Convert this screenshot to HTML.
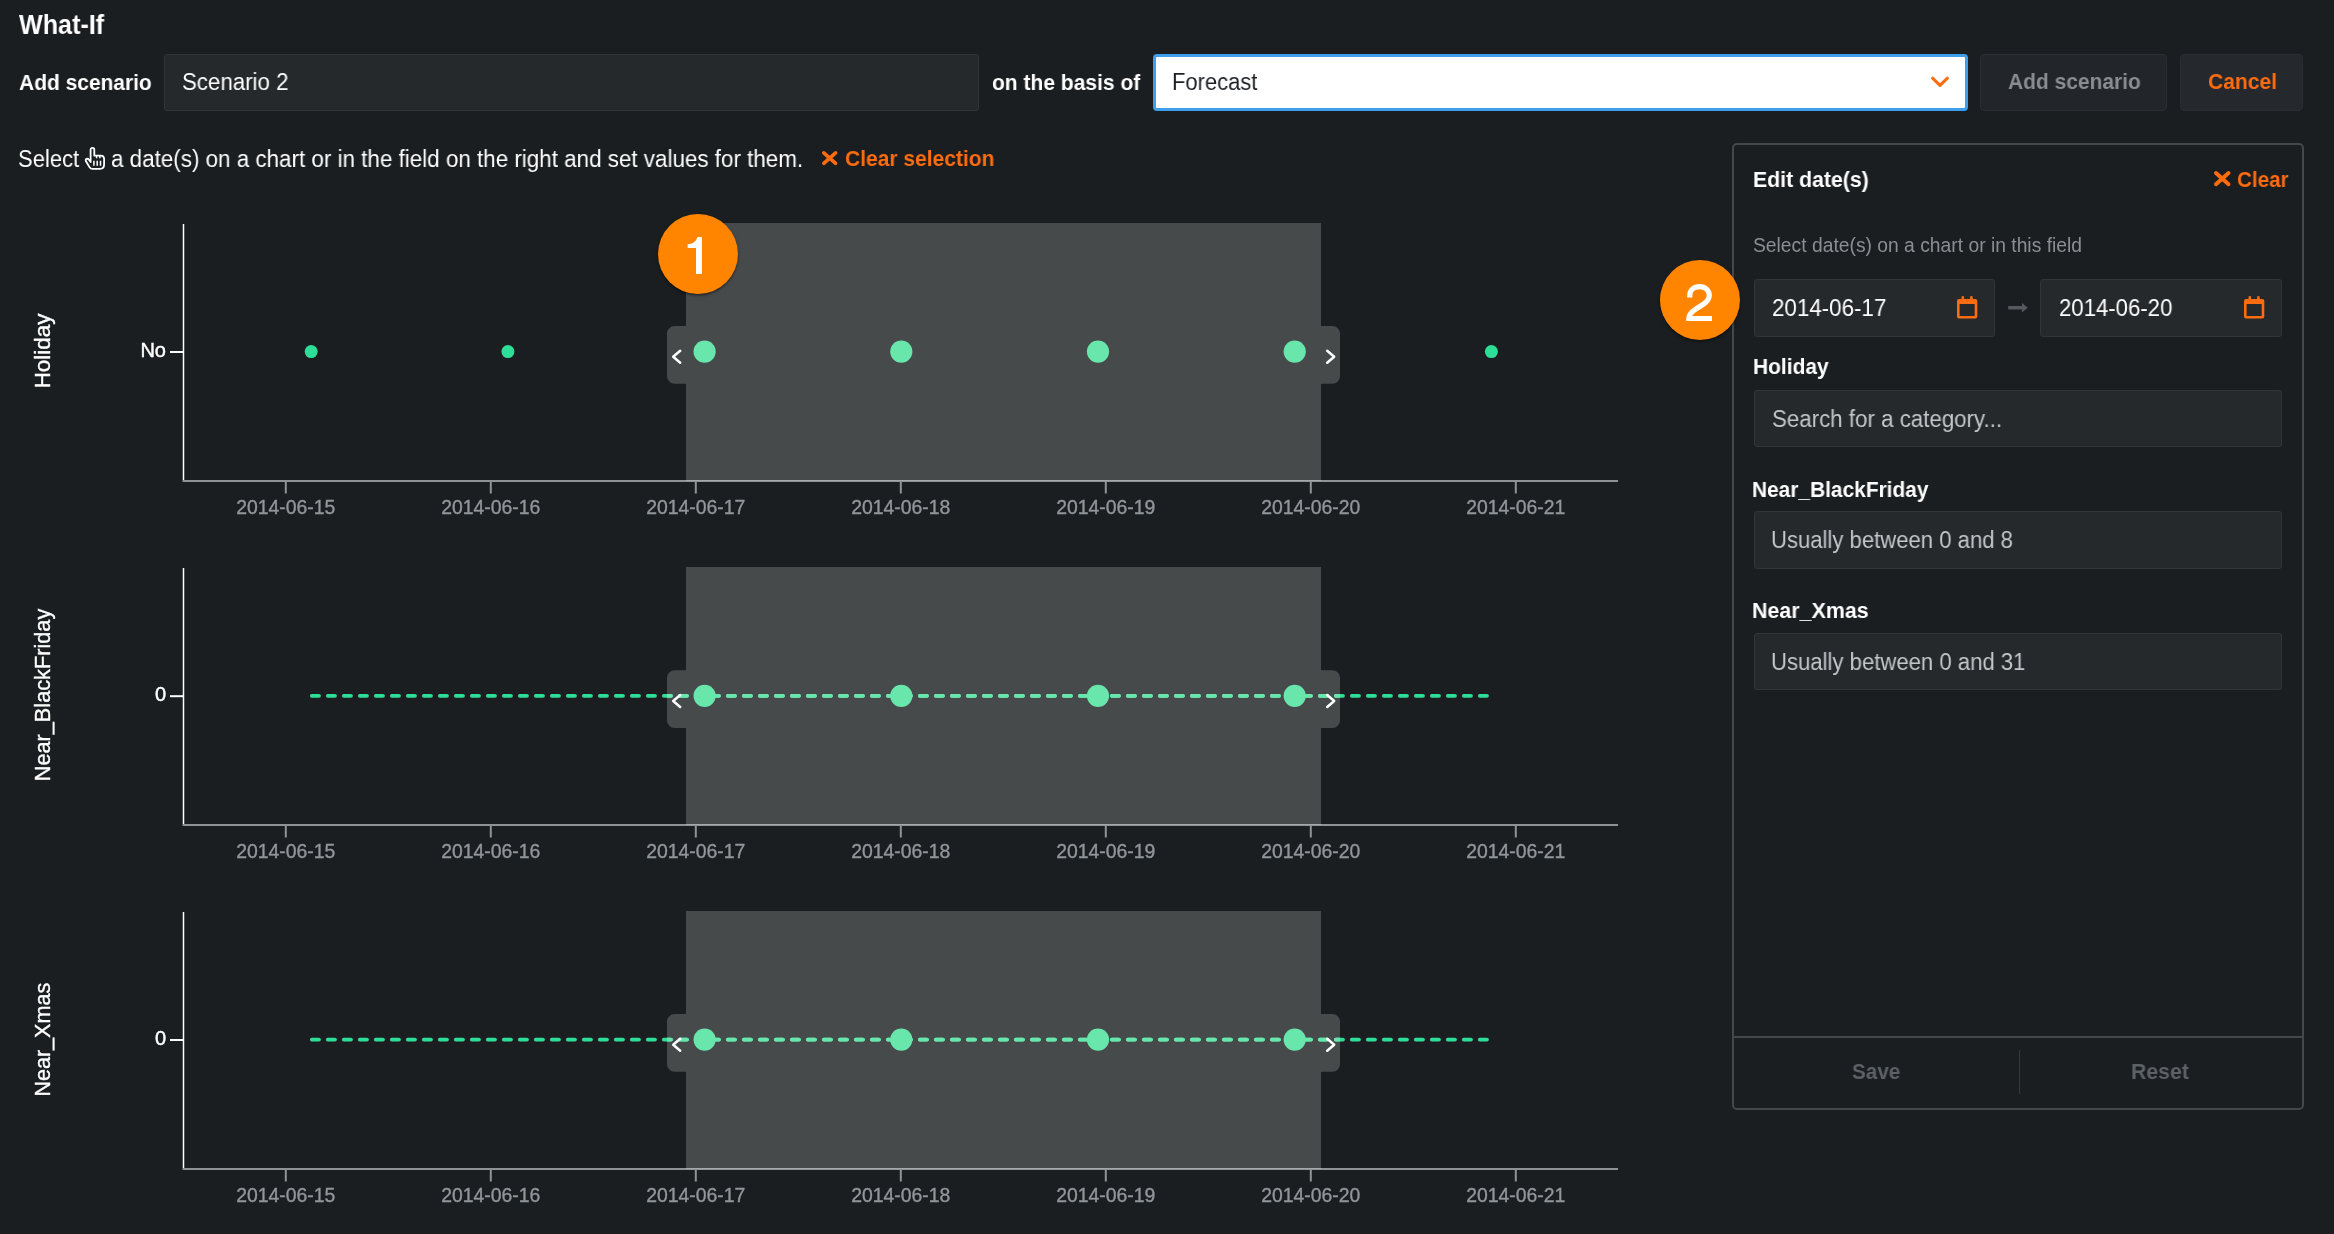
<!DOCTYPE html>
<html><head><meta charset="utf-8"><title>What-If</title>
<style>
html,body{margin:0;padding:0;}
body{width:2334px;height:1234px;background:#1a1e20;position:relative;overflow:hidden;font-family:"Liberation Sans",sans-serif;}
.t{position:absolute;line-height:0;white-space:nowrap;transform-origin:0 0;will-change:transform;}
.ab{position:absolute;}
.box{position:absolute;box-sizing:border-box;}
.inp{background:#25292c;border:1.5px solid #323538;border-radius:3px;}
.badge{position:absolute;border-radius:50%;background:#ff8400;box-shadow:0 1.5px 2.5px rgba(0,0,0,0.5);color:#fff;text-align:center;font-family:"Liberation Sans",sans-serif;}
</style></head><body>
<!-- header inputs -->
<div class="box inp" style="left:164px;top:54px;width:815px;height:56.5px;"></div>
<div class="box" style="left:1153px;top:53.5px;width:815px;height:57.3px;background:#fff;border:3.8px solid #3d9fe9;border-radius:4px;"></div>
<svg class="ab" style="left:1928px;top:72px" width="24" height="18" viewBox="0 0 24 18"><polyline points="4.6,6.2 12,13.4 19.4,6.2" fill="none" stroke="#fd6c10" stroke-width="3" stroke-linecap="round" stroke-linejoin="round"/></svg>
<div class="box" style="left:1980.3px;top:54px;width:187px;height:56.7px;background:#22262b;border:1.5px solid #2b2f34;border-radius:4px;"></div>
<div class="box" style="left:2180.4px;top:54px;width:122.7px;height:56.7px;background:#25292d;border:1.5px solid #2a2e32;border-radius:4px;"></div>
<!-- instruction -->
<svg class="ab" style="left:83px;top:145px" width="26" height="28" viewBox="83 145 26 28">
<path d="M90.6,162 V149.7 a1.85,1.85 0 0 1 3.7,0 V155.6 h6.3 c2.3,0 3.5,1.5 3.5,3.5 V164.6 c0,2.5 -1.6,4.3 -4,4.3 h-7.6 c-1.4,0 -2.3,-0.6 -3,-1.8 l-3.5,-5.9 c-0.6,-1 -0.3,-2 0.6,-2.3 c0.9,-0.3 1.7,0 2.3,0.8 z" fill="none" stroke="#fff" stroke-width="1.8" stroke-linejoin="round"/>
<path d="M93.9,160.8 V165.8 M97.2,160.8 V165.8 M100.5,160.8 V165.8 M96.6,155.8 V158.3 M99.9,156 V158.3" stroke="#fff" stroke-width="1.5"/>
</svg>
<svg class="ab" style="left:820.20px;top:149.40px" width="19.40" height="18.10" viewBox="820.20 149.40 19.40 18.10"><path d="M824.00,153.20 L835.80,163.70 M835.80,153.20 L824.00,163.70" stroke="#fd6c10" stroke-width="3.6" stroke-linecap="round"/></svg>
<!-- panel -->
<div class="box" style="left:1732px;top:143px;width:572px;height:967px;border:2px solid #44484b;border-radius:5px;"></div>
<div class="box" style="left:1733px;top:1035.5px;width:570px;height:2px;background:#44484b;"></div>
<div class="box" style="left:2018.8px;top:1050px;width:1.6px;height:44px;background:#34383b;"></div>
<svg class="ab" style="left:2212.30px;top:169.00px" width="20.50" height="19.20" viewBox="2212.30 169.00 20.50 19.20"><path d="M2216.25,172.95 L2228.85,184.25 M2228.85,172.95 L2216.25,184.25" stroke="#fd6c10" stroke-width="3.9" stroke-linecap="round"/></svg>
<div class="box inp" style="left:1753.7px;top:279px;width:241.6px;height:57.5px;"></div>
<div class="box inp" style="left:2040.4px;top:278.7px;width:241.6px;height:57.9px;"></div>
<svg class="ab" style="left:1956.5px;top:296px" width="22" height="24" viewBox="0 0 22 24"><path fill-rule="evenodd" fill="#fd6c10" d="M2,3.1 H18.3 a2,2 0 0 1 2,2 V20.6 a2,2 0 0 1 -2,2 H2 a2,2 0 0 1 -2,-2 V5.1 a2,2 0 0 1 2,-2 Z M2.6,7.9 V20 H17.7 V7.9 Z"/><path fill="#fd6c10" d="M4.5,4 V1.3 a1.3,1.3 0 0 1 2.6,0 V4 Z M13.1,4 V1.3 a1.3,1.3 0 0 1 2.6,0 V4 Z"/></svg>
<svg class="ab" style="left:2243.7px;top:296px" width="22" height="24" viewBox="0 0 22 24"><path fill-rule="evenodd" fill="#fd6c10" d="M2,3.1 H18.3 a2,2 0 0 1 2,2 V20.6 a2,2 0 0 1 -2,2 H2 a2,2 0 0 1 -2,-2 V5.1 a2,2 0 0 1 2,-2 Z M2.6,7.9 V20 H17.7 V7.9 Z"/><path fill="#fd6c10" d="M4.5,4 V1.3 a1.3,1.3 0 0 1 2.6,0 V4 Z M13.1,4 V1.3 a1.3,1.3 0 0 1 2.6,0 V4 Z"/></svg>
<svg class="ab" style="left:2000px;top:295px" width="35" height="25" viewBox="2000 295 35 25"><path d="M2008.2,306 H2022 V302.9 L2027.8,307.8 L2022,312.6 V309.6 H2008.2 Z" fill="#56595d"/></svg>
<div class="box inp" style="left:1753.7px;top:390.4px;width:528.3px;height:56.2px;"></div>
<div class="box inp" style="left:1753.5px;top:511px;width:528.7px;height:57.7px;"></div>
<div class="box inp" style="left:1753.5px;top:633px;width:528.7px;height:57.4px;"></div>
<!-- charts -->
<svg class="ab" style="left:0;top:0;will-change:transform" width="1700" height="1234" viewBox="0 0 1700 1234" font-family="Liberation Sans, sans-serif">
<clipPath id="sel0"><path d="M686,223 H1321 V326.1 H1332.5 a7.5,7.5 0 0 1 7.5,7.5 V376.3 a7.5,7.5 0 0 1 -7.5,7.5 H1321 V481 H686 V383.8 H674.5 a7.5,7.5 0 0 1 -7.5,-7.5 V333.6 a7.5,7.5 0 0 1 7.5,-7.5 H686 Z"/></clipPath>
<circle cx="311.2" cy="351.6" r="6.5" fill="#2ede98"/>
<circle cx="507.9" cy="351.6" r="6.5" fill="#2ede98"/>
<circle cx="1491.4" cy="351.6" r="6.5" fill="#2ede98"/>
<line x1="183.5" y1="224" x2="183.5" y2="482" stroke="#ffffff" stroke-width="1.5"/>
<line x1="183" y1="481" x2="1618" y2="481" stroke="#8f9396" stroke-width="2.1"/>
<line x1="285.8" y1="481" x2="285.8" y2="493.5" stroke="#8f9396" stroke-width="2"/>
<line x1="490.8" y1="481" x2="490.8" y2="493.5" stroke="#8f9396" stroke-width="2"/>
<line x1="695.8" y1="481" x2="695.8" y2="493.5" stroke="#8f9396" stroke-width="2"/>
<line x1="900.8" y1="481" x2="900.8" y2="493.5" stroke="#8f9396" stroke-width="2"/>
<line x1="1105.8" y1="481" x2="1105.8" y2="493.5" stroke="#8f9396" stroke-width="2"/>
<line x1="1310.8" y1="481" x2="1310.8" y2="493.5" stroke="#8f9396" stroke-width="2"/>
<line x1="1515.8" y1="481" x2="1515.8" y2="493.5" stroke="#8f9396" stroke-width="2"/>
<path d="M686,223 H1321 V326.1 H1332.5 a7.5,7.5 0 0 1 7.5,7.5 V376.3 a7.5,7.5 0 0 1 -7.5,7.5 H1321 V481 H686 V383.8 H674.5 a7.5,7.5 0 0 1 -7.5,-7.5 V333.6 a7.5,7.5 0 0 1 7.5,-7.5 H686 Z" fill="#ffffff" fill-opacity="0.195"/>
<circle cx="704.6" cy="351.6" r="11.1" fill="#68e6ac"/>
<circle cx="901.3" cy="351.6" r="11.1" fill="#68e6ac"/>
<circle cx="1098.0" cy="351.6" r="11.1" fill="#68e6ac"/>
<circle cx="1294.7" cy="351.6" r="11.1" fill="#68e6ac"/>
<polyline points="680.2,350.8 673.2,356.8 680.2,362.8" fill="none" stroke="#ffffff" stroke-width="2.5" stroke-linecap="round" stroke-linejoin="round"/>
<polyline points="1327.2,350.8 1334.2,356.8 1327.2,362.8" fill="none" stroke="#ffffff" stroke-width="2.5" stroke-linecap="round" stroke-linejoin="round"/>
<line x1="170" y1="352.0" x2="184" y2="352.0" stroke="#ffffff" stroke-width="2"/>
<text x="166" y="357.20000000000005" text-anchor="end" font-size="20" fill="#ffffff" stroke="#ffffff" stroke-width="0.45">No</text>
<text x="285.8" y="514" text-anchor="middle" font-size="19.4" fill="#92969a" stroke="#92969a" stroke-width="0.35">2014-06-15</text>
<text x="490.8" y="514" text-anchor="middle" font-size="19.4" fill="#92969a" stroke="#92969a" stroke-width="0.35">2014-06-16</text>
<text x="695.8" y="514" text-anchor="middle" font-size="19.4" fill="#92969a" stroke="#92969a" stroke-width="0.35">2014-06-17</text>
<text x="900.8" y="514" text-anchor="middle" font-size="19.4" fill="#92969a" stroke="#92969a" stroke-width="0.35">2014-06-18</text>
<text x="1105.8" y="514" text-anchor="middle" font-size="19.4" fill="#92969a" stroke="#92969a" stroke-width="0.35">2014-06-19</text>
<text x="1310.8" y="514" text-anchor="middle" font-size="19.4" fill="#92969a" stroke="#92969a" stroke-width="0.35">2014-06-20</text>
<text x="1515.8" y="514" text-anchor="middle" font-size="19.4" fill="#92969a" stroke="#92969a" stroke-width="0.35">2014-06-21</text>
<text transform="translate(50,351.0) rotate(-90) scale(1.0,1)" text-anchor="middle" font-size="22.4" fill="#ffffff" stroke="#ffffff" stroke-width="0.35">Holiday</text>
<clipPath id="sel1"><path d="M686,567 H1321 V670.3 H1332.5 a7.5,7.5 0 0 1 7.5,7.5 V720.5 a7.5,7.5 0 0 1 -7.5,7.5 H1321 V825 H686 V728.0 H674.5 a7.5,7.5 0 0 1 -7.5,-7.5 V677.8 a7.5,7.5 0 0 1 7.5,-7.5 H686 Z"/></clipPath>
<line x1="311.8" y1="695.8" x2="1487.2" y2="695.8" stroke="#2ede98" stroke-width="3.8" stroke-linecap="round" stroke-dasharray="7.2 8.8"/>
<line x1="183.5" y1="568" x2="183.5" y2="826" stroke="#ffffff" stroke-width="1.5"/>
<line x1="183" y1="825" x2="1618" y2="825" stroke="#8f9396" stroke-width="2.1"/>
<line x1="285.8" y1="825" x2="285.8" y2="837.5" stroke="#8f9396" stroke-width="2"/>
<line x1="490.8" y1="825" x2="490.8" y2="837.5" stroke="#8f9396" stroke-width="2"/>
<line x1="695.8" y1="825" x2="695.8" y2="837.5" stroke="#8f9396" stroke-width="2"/>
<line x1="900.8" y1="825" x2="900.8" y2="837.5" stroke="#8f9396" stroke-width="2"/>
<line x1="1105.8" y1="825" x2="1105.8" y2="837.5" stroke="#8f9396" stroke-width="2"/>
<line x1="1310.8" y1="825" x2="1310.8" y2="837.5" stroke="#8f9396" stroke-width="2"/>
<line x1="1515.8" y1="825" x2="1515.8" y2="837.5" stroke="#8f9396" stroke-width="2"/>
<path d="M686,567 H1321 V670.3 H1332.5 a7.5,7.5 0 0 1 7.5,7.5 V720.5 a7.5,7.5 0 0 1 -7.5,7.5 H1321 V825 H686 V728.0 H674.5 a7.5,7.5 0 0 1 -7.5,-7.5 V677.8 a7.5,7.5 0 0 1 7.5,-7.5 H686 Z" fill="#ffffff" fill-opacity="0.195"/>
<g clip-path="url(#sel1)"><line x1="311.8" y1="695.8" x2="1487.2" y2="695.8" stroke="#68e6ac" stroke-width="3.8" stroke-linecap="round" stroke-dasharray="7.2 8.8"/></g>
<circle cx="704.6" cy="695.8" r="11.1" fill="#68e6ac"/>
<circle cx="901.3" cy="695.8" r="11.1" fill="#68e6ac"/>
<circle cx="1098.0" cy="695.8" r="11.1" fill="#68e6ac"/>
<circle cx="1294.7" cy="695.8" r="11.1" fill="#68e6ac"/>
<polyline points="680.2,695.0 673.2,701.0 680.2,707.0" fill="none" stroke="#ffffff" stroke-width="2.5" stroke-linecap="round" stroke-linejoin="round"/>
<polyline points="1327.2,695.0 1334.2,701.0 1327.2,707.0" fill="none" stroke="#ffffff" stroke-width="2.5" stroke-linecap="round" stroke-linejoin="round"/>
<line x1="170" y1="696.1999999999999" x2="184" y2="696.1999999999999" stroke="#ffffff" stroke-width="2"/>
<text x="166" y="701.4" text-anchor="end" font-size="20" fill="#ffffff" stroke="#ffffff" stroke-width="0.45">0</text>
<text x="285.8" y="858" text-anchor="middle" font-size="19.4" fill="#92969a" stroke="#92969a" stroke-width="0.35">2014-06-15</text>
<text x="490.8" y="858" text-anchor="middle" font-size="19.4" fill="#92969a" stroke="#92969a" stroke-width="0.35">2014-06-16</text>
<text x="695.8" y="858" text-anchor="middle" font-size="19.4" fill="#92969a" stroke="#92969a" stroke-width="0.35">2014-06-17</text>
<text x="900.8" y="858" text-anchor="middle" font-size="19.4" fill="#92969a" stroke="#92969a" stroke-width="0.35">2014-06-18</text>
<text x="1105.8" y="858" text-anchor="middle" font-size="19.4" fill="#92969a" stroke="#92969a" stroke-width="0.35">2014-06-19</text>
<text x="1310.8" y="858" text-anchor="middle" font-size="19.4" fill="#92969a" stroke="#92969a" stroke-width="0.35">2014-06-20</text>
<text x="1515.8" y="858" text-anchor="middle" font-size="19.4" fill="#92969a" stroke="#92969a" stroke-width="0.35">2014-06-21</text>
<text transform="translate(50,695.0) rotate(-90) scale(0.97,1)" text-anchor="middle" font-size="22.4" fill="#ffffff" stroke="#ffffff" stroke-width="0.35">Near_BlackFriday</text>
<clipPath id="sel2"><path d="M686,911 H1321 V1014.0999999999999 H1332.5 a7.5,7.5 0 0 1 7.5,7.5 V1064.3 a7.5,7.5 0 0 1 -7.5,7.5 H1321 V1169 H686 V1071.8 H674.5 a7.5,7.5 0 0 1 -7.5,-7.5 V1021.5999999999999 a7.5,7.5 0 0 1 7.5,-7.5 H686 Z"/></clipPath>
<line x1="311.8" y1="1039.6" x2="1487.2" y2="1039.6" stroke="#2ede98" stroke-width="3.8" stroke-linecap="round" stroke-dasharray="7.2 8.8"/>
<line x1="183.5" y1="912" x2="183.5" y2="1170" stroke="#ffffff" stroke-width="1.5"/>
<line x1="183" y1="1169" x2="1618" y2="1169" stroke="#8f9396" stroke-width="2.1"/>
<line x1="285.8" y1="1169" x2="285.8" y2="1181.5" stroke="#8f9396" stroke-width="2"/>
<line x1="490.8" y1="1169" x2="490.8" y2="1181.5" stroke="#8f9396" stroke-width="2"/>
<line x1="695.8" y1="1169" x2="695.8" y2="1181.5" stroke="#8f9396" stroke-width="2"/>
<line x1="900.8" y1="1169" x2="900.8" y2="1181.5" stroke="#8f9396" stroke-width="2"/>
<line x1="1105.8" y1="1169" x2="1105.8" y2="1181.5" stroke="#8f9396" stroke-width="2"/>
<line x1="1310.8" y1="1169" x2="1310.8" y2="1181.5" stroke="#8f9396" stroke-width="2"/>
<line x1="1515.8" y1="1169" x2="1515.8" y2="1181.5" stroke="#8f9396" stroke-width="2"/>
<path d="M686,911 H1321 V1014.0999999999999 H1332.5 a7.5,7.5 0 0 1 7.5,7.5 V1064.3 a7.5,7.5 0 0 1 -7.5,7.5 H1321 V1169 H686 V1071.8 H674.5 a7.5,7.5 0 0 1 -7.5,-7.5 V1021.5999999999999 a7.5,7.5 0 0 1 7.5,-7.5 H686 Z" fill="#ffffff" fill-opacity="0.195"/>
<g clip-path="url(#sel2)"><line x1="311.8" y1="1039.6" x2="1487.2" y2="1039.6" stroke="#68e6ac" stroke-width="3.8" stroke-linecap="round" stroke-dasharray="7.2 8.8"/></g>
<circle cx="704.6" cy="1039.6" r="11.1" fill="#68e6ac"/>
<circle cx="901.3" cy="1039.6" r="11.1" fill="#68e6ac"/>
<circle cx="1098.0" cy="1039.6" r="11.1" fill="#68e6ac"/>
<circle cx="1294.7" cy="1039.6" r="11.1" fill="#68e6ac"/>
<polyline points="680.2,1038.8 673.2,1044.8 680.2,1050.8" fill="none" stroke="#ffffff" stroke-width="2.5" stroke-linecap="round" stroke-linejoin="round"/>
<polyline points="1327.2,1038.8 1334.2,1044.8 1327.2,1050.8" fill="none" stroke="#ffffff" stroke-width="2.5" stroke-linecap="round" stroke-linejoin="round"/>
<line x1="170" y1="1040.0" x2="184" y2="1040.0" stroke="#ffffff" stroke-width="2"/>
<text x="166" y="1045.1999999999998" text-anchor="end" font-size="20" fill="#ffffff" stroke="#ffffff" stroke-width="0.45">0</text>
<text x="285.8" y="1202" text-anchor="middle" font-size="19.4" fill="#92969a" stroke="#92969a" stroke-width="0.35">2014-06-15</text>
<text x="490.8" y="1202" text-anchor="middle" font-size="19.4" fill="#92969a" stroke="#92969a" stroke-width="0.35">2014-06-16</text>
<text x="695.8" y="1202" text-anchor="middle" font-size="19.4" fill="#92969a" stroke="#92969a" stroke-width="0.35">2014-06-17</text>
<text x="900.8" y="1202" text-anchor="middle" font-size="19.4" fill="#92969a" stroke="#92969a" stroke-width="0.35">2014-06-18</text>
<text x="1105.8" y="1202" text-anchor="middle" font-size="19.4" fill="#92969a" stroke="#92969a" stroke-width="0.35">2014-06-19</text>
<text x="1310.8" y="1202" text-anchor="middle" font-size="19.4" fill="#92969a" stroke="#92969a" stroke-width="0.35">2014-06-20</text>
<text x="1515.8" y="1202" text-anchor="middle" font-size="19.4" fill="#92969a" stroke="#92969a" stroke-width="0.35">2014-06-21</text>
<text transform="translate(50,1039.7) rotate(-90) scale(0.962,1)" text-anchor="middle" font-size="22.4" fill="#ffffff" stroke="#ffffff" stroke-width="0.35">Near_Xmas</text>
</svg>
<!-- badges -->
<div class="badge" style="left:658px;top:214px;width:80px;height:80px;"></div>
<div class="badge" style="left:1659.8px;top:259.8px;width:80.4px;height:80.4px;"></div>
<svg class="ab" style="left:640px;top:200px" width="1120" height="160" viewBox="640 200 1120 160" font-family="Liberation Sans, sans-serif">
<path d="M696,274 V248 H687.7 V244 C691.8,244 696.2,242.2 697.4,237 H701.9 V274 Z" fill="#fff"/>
<path d="M1689.8,297.6 V295.5 C1689.8,289.8 1694,286.6 1699.5,286.6 C1705.2,286.6 1709.3,290.3 1709.3,295.3 C1709.3,299.5 1707,302 1703,304.5 L1697,308.2 C1691.5,311.6 1688.8,314.5 1688.8,318.5 H1712" fill="none" stroke="#fff" stroke-width="5.2"/>
</svg>
<!-- texts -->
<div class="t" style="left:19.0px;top:23.7px;font-size:28.5px;font-weight:bold;color:#ffffff;transform:scaleX(0.881)">What-If</div>
<div class="t" style="left:19.0px;top:81.8px;font-size:22.7px;font-weight:bold;color:#ffffff;transform:scaleX(0.924)">Add scenario</div>
<div class="t" style="left:182.3px;top:82.0px;font-size:23px;font-weight:normal;color:#ffffff;transform:scaleX(0.968)">Scenario 2</div>
<div class="t" style="left:991.8px;top:81.8px;font-size:22.7px;font-weight:bold;color:#ffffff;transform:scaleX(0.926)">on the basis of</div>
<div class="t" style="left:1172.4px;top:82.0px;font-size:23px;font-weight:normal;color:#1d2125;transform:scaleX(0.955)">Forecast</div>
<div class="t" style="left:2007.8px;top:81.7px;font-size:22.5px;font-weight:bold;color:#8a8e92;transform:scaleX(0.932)">Add scenario</div>
<div class="t" style="left:2207.7px;top:81.7px;font-size:22.5px;font-weight:bold;color:#fd6c10;transform:scaleX(0.936)">Cancel</div>
<div class="t" style="left:18.1px;top:159.2px;font-size:23.5px;font-weight:normal;color:#ffffff;transform:scaleX(0.937)">Select</div>
<div class="t" style="left:110.8px;top:159.2px;font-size:23.5px;font-weight:normal;color:#ffffff;transform:scaleX(0.953)">a date(s) on a chart or in the field on the right and set values for them.</div>
<div class="t" style="left:844.9px;top:159.4px;font-size:22.5px;font-weight:bold;color:#fd6c10;transform:scaleX(0.934)">Clear selection</div>
<div class="t" style="left:1752.8px;top:179.9px;font-size:22.5px;font-weight:bold;color:#ffffff;transform:scaleX(0.945)">Edit date(s)</div>
<div class="t" style="left:2237.0px;top:180.0px;font-size:22.2px;font-weight:bold;color:#fd6c10;transform:scaleX(0.931)">Clear</div>
<div class="t" style="left:1753.0px;top:246.1px;font-size:19.3px;font-weight:normal;color:#8b8f93;transform:scaleX(0.999)">Select date(s) on a chart or in this field</div>
<div class="t" style="left:1771.7px;top:307.9px;font-size:23.5px;font-weight:normal;color:#ffffff;transform:scaleX(0.951)">2014-06-17</div>
<div class="t" style="left:2059.1px;top:307.9px;font-size:23.5px;font-weight:normal;color:#ffffff;transform:scaleX(0.943)">2014-06-20</div>
<div class="t" style="left:1752.8px;top:367.0px;font-size:22.2px;font-weight:bold;color:#ffffff;transform:scaleX(0.944)">Holiday</div>
<div class="t" style="left:1771.7px;top:418.9px;font-size:23.3px;font-weight:normal;color:#c4c7ca;transform:scaleX(0.957)">Search for a category...</div>
<div class="t" style="left:1752.1px;top:489.5px;font-size:22.2px;font-weight:bold;color:#ffffff;transform:scaleX(0.941)">Near_BlackFriday</div>
<div class="t" style="left:1771.1px;top:540.2px;font-size:23.5px;font-weight:normal;color:#c4c7ca;transform:scaleX(0.940)">Usually between 0 and 8</div>
<div class="t" style="left:1752.0px;top:611.0px;font-size:22.2px;font-weight:bold;color:#ffffff;transform:scaleX(0.965)">Near_Xmas</div>
<div class="t" style="left:1771.1px;top:661.9px;font-size:23.5px;font-weight:normal;color:#c4c7ca;transform:scaleX(0.941)">Usually between 0 and 31</div>
<div class="t" style="left:1852.0px;top:1072.0px;font-size:22.2px;font-weight:bold;color:#5d6266;transform:scaleX(0.932)">Save</div>
<div class="t" style="left:2131.0px;top:1072.0px;font-size:22.2px;font-weight:bold;color:#5d6266;transform:scaleX(0.958)">Reset</div>
</body></html>
